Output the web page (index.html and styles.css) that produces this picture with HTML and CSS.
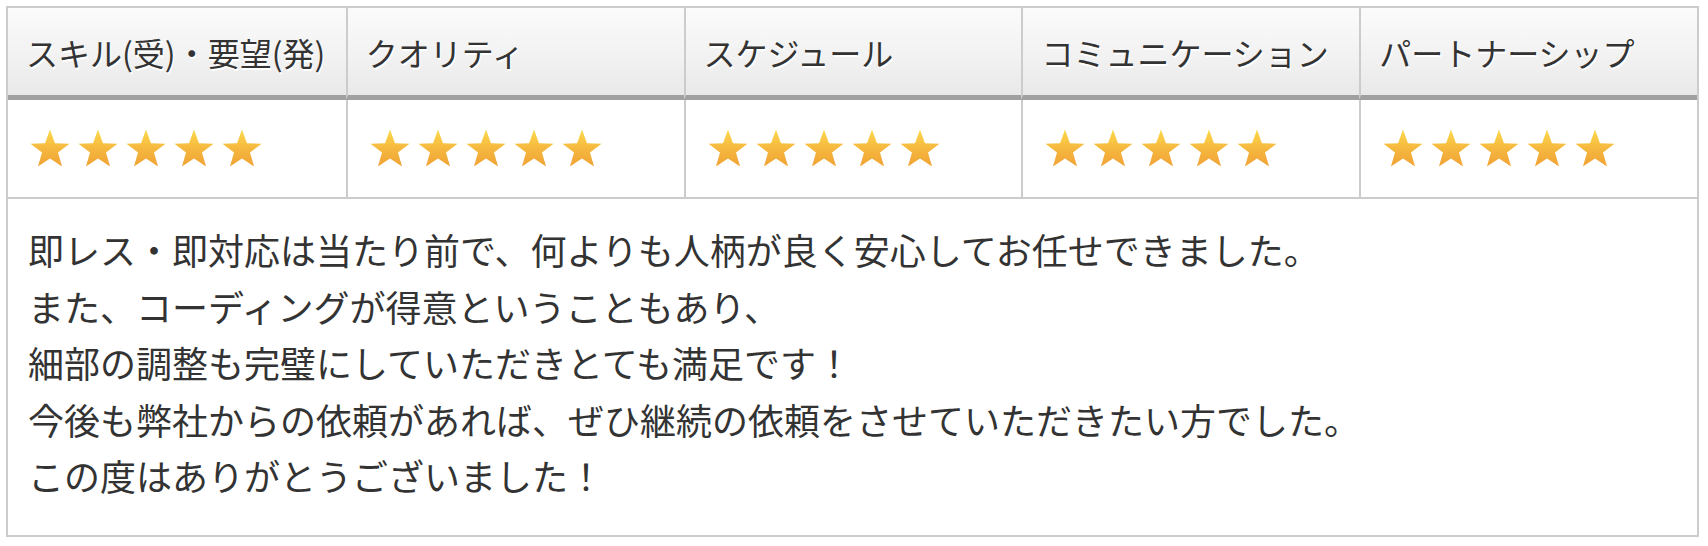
FILE: index.html
```html
<!DOCTYPE html>
<html lang="ja">
<head>
<meta charset="utf-8">
<title>評価</title>
<link rel="stylesheet" href="styles.css">
</head>
<body>
<svg class="defs" width="0" height="0" aria-hidden="true">
  <defs>
    <linearGradient id="starGrad" x1="0" y1="0" x2="0" y2="1">
      <stop offset="0" stop-color="#fcd94c"/>
      <stop offset="0.55" stop-color="#f5b63e"/>
      <stop offset="1" stop-color="#f0a236"/>
    </linearGradient>
  </defs>
</svg>
<div class="review">
  <div class="grid">
    <div class="head">スキル(受)・要望(発)</div>
    <div class="head">クオリティ</div>
    <div class="head">スケジュール</div>
    <div class="head">コミュニケーション</div>
    <div class="head">パートナーシップ</div>

    <div class="rate"><span class="stars">
      <svg class="star" viewBox="0 0 40 39"><polygon points="20,0.5 24.94,14.2 39.5,14.67 27.99,23.6 32.05,37.58 20,29.4 7.95,37.58 12.01,23.6 0.5,14.67 15.06,14.2" fill="url(#starGrad)"/></svg>
      <svg class="star" viewBox="0 0 40 39"><polygon points="20,0.5 24.94,14.2 39.5,14.67 27.99,23.6 32.05,37.58 20,29.4 7.95,37.58 12.01,23.6 0.5,14.67 15.06,14.2" fill="url(#starGrad)"/></svg>
      <svg class="star" viewBox="0 0 40 39"><polygon points="20,0.5 24.94,14.2 39.5,14.67 27.99,23.6 32.05,37.58 20,29.4 7.95,37.58 12.01,23.6 0.5,14.67 15.06,14.2" fill="url(#starGrad)"/></svg>
      <svg class="star" viewBox="0 0 40 39"><polygon points="20,0.5 24.94,14.2 39.5,14.67 27.99,23.6 32.05,37.58 20,29.4 7.95,37.58 12.01,23.6 0.5,14.67 15.06,14.2" fill="url(#starGrad)"/></svg>
      <svg class="star" viewBox="0 0 40 39"><polygon points="20,0.5 24.94,14.2 39.5,14.67 27.99,23.6 32.05,37.58 20,29.4 7.95,37.58 12.01,23.6 0.5,14.67 15.06,14.2" fill="url(#starGrad)"/></svg>
    </span></div>
    <div class="rate"><span class="stars">
      <svg class="star" viewBox="0 0 40 39"><polygon points="20,0.5 24.94,14.2 39.5,14.67 27.99,23.6 32.05,37.58 20,29.4 7.95,37.58 12.01,23.6 0.5,14.67 15.06,14.2" fill="url(#starGrad)"/></svg>
      <svg class="star" viewBox="0 0 40 39"><polygon points="20,0.5 24.94,14.2 39.5,14.67 27.99,23.6 32.05,37.58 20,29.4 7.95,37.58 12.01,23.6 0.5,14.67 15.06,14.2" fill="url(#starGrad)"/></svg>
      <svg class="star" viewBox="0 0 40 39"><polygon points="20,0.5 24.94,14.2 39.5,14.67 27.99,23.6 32.05,37.58 20,29.4 7.95,37.58 12.01,23.6 0.5,14.67 15.06,14.2" fill="url(#starGrad)"/></svg>
      <svg class="star" viewBox="0 0 40 39"><polygon points="20,0.5 24.94,14.2 39.5,14.67 27.99,23.6 32.05,37.58 20,29.4 7.95,37.58 12.01,23.6 0.5,14.67 15.06,14.2" fill="url(#starGrad)"/></svg>
      <svg class="star" viewBox="0 0 40 39"><polygon points="20,0.5 24.94,14.2 39.5,14.67 27.99,23.6 32.05,37.58 20,29.4 7.95,37.58 12.01,23.6 0.5,14.67 15.06,14.2" fill="url(#starGrad)"/></svg>
    </span></div>
    <div class="rate"><span class="stars">
      <svg class="star" viewBox="0 0 40 39"><polygon points="20,0.5 24.94,14.2 39.5,14.67 27.99,23.6 32.05,37.58 20,29.4 7.95,37.58 12.01,23.6 0.5,14.67 15.06,14.2" fill="url(#starGrad)"/></svg>
      <svg class="star" viewBox="0 0 40 39"><polygon points="20,0.5 24.94,14.2 39.5,14.67 27.99,23.6 32.05,37.58 20,29.4 7.95,37.58 12.01,23.6 0.5,14.67 15.06,14.2" fill="url(#starGrad)"/></svg>
      <svg class="star" viewBox="0 0 40 39"><polygon points="20,0.5 24.94,14.2 39.5,14.67 27.99,23.6 32.05,37.58 20,29.4 7.95,37.58 12.01,23.6 0.5,14.67 15.06,14.2" fill="url(#starGrad)"/></svg>
      <svg class="star" viewBox="0 0 40 39"><polygon points="20,0.5 24.94,14.2 39.5,14.67 27.99,23.6 32.05,37.58 20,29.4 7.95,37.58 12.01,23.6 0.5,14.67 15.06,14.2" fill="url(#starGrad)"/></svg>
      <svg class="star" viewBox="0 0 40 39"><polygon points="20,0.5 24.94,14.2 39.5,14.67 27.99,23.6 32.05,37.58 20,29.4 7.95,37.58 12.01,23.6 0.5,14.67 15.06,14.2" fill="url(#starGrad)"/></svg>
    </span></div>
    <div class="rate"><span class="stars">
      <svg class="star" viewBox="0 0 40 39"><polygon points="20,0.5 24.94,14.2 39.5,14.67 27.99,23.6 32.05,37.58 20,29.4 7.95,37.58 12.01,23.6 0.5,14.67 15.06,14.2" fill="url(#starGrad)"/></svg>
      <svg class="star" viewBox="0 0 40 39"><polygon points="20,0.5 24.94,14.2 39.5,14.67 27.99,23.6 32.05,37.58 20,29.4 7.95,37.58 12.01,23.6 0.5,14.67 15.06,14.2" fill="url(#starGrad)"/></svg>
      <svg class="star" viewBox="0 0 40 39"><polygon points="20,0.5 24.94,14.2 39.5,14.67 27.99,23.6 32.05,37.58 20,29.4 7.95,37.58 12.01,23.6 0.5,14.67 15.06,14.2" fill="url(#starGrad)"/></svg>
      <svg class="star" viewBox="0 0 40 39"><polygon points="20,0.5 24.94,14.2 39.5,14.67 27.99,23.6 32.05,37.58 20,29.4 7.95,37.58 12.01,23.6 0.5,14.67 15.06,14.2" fill="url(#starGrad)"/></svg>
      <svg class="star" viewBox="0 0 40 39"><polygon points="20,0.5 24.94,14.2 39.5,14.67 27.99,23.6 32.05,37.58 20,29.4 7.95,37.58 12.01,23.6 0.5,14.67 15.06,14.2" fill="url(#starGrad)"/></svg>
    </span></div>
    <div class="rate"><span class="stars">
      <svg class="star" viewBox="0 0 40 39"><polygon points="20,0.5 24.94,14.2 39.5,14.67 27.99,23.6 32.05,37.58 20,29.4 7.95,37.58 12.01,23.6 0.5,14.67 15.06,14.2" fill="url(#starGrad)"/></svg>
      <svg class="star" viewBox="0 0 40 39"><polygon points="20,0.5 24.94,14.2 39.5,14.67 27.99,23.6 32.05,37.58 20,29.4 7.95,37.58 12.01,23.6 0.5,14.67 15.06,14.2" fill="url(#starGrad)"/></svg>
      <svg class="star" viewBox="0 0 40 39"><polygon points="20,0.5 24.94,14.2 39.5,14.67 27.99,23.6 32.05,37.58 20,29.4 7.95,37.58 12.01,23.6 0.5,14.67 15.06,14.2" fill="url(#starGrad)"/></svg>
      <svg class="star" viewBox="0 0 40 39"><polygon points="20,0.5 24.94,14.2 39.5,14.67 27.99,23.6 32.05,37.58 20,29.4 7.95,37.58 12.01,23.6 0.5,14.67 15.06,14.2" fill="url(#starGrad)"/></svg>
      <svg class="star" viewBox="0 0 40 39"><polygon points="20,0.5 24.94,14.2 39.5,14.67 27.99,23.6 32.05,37.58 20,29.4 7.95,37.58 12.01,23.6 0.5,14.67 15.06,14.2" fill="url(#starGrad)"/></svg>
    </span></div>
  </div>
  <div class="comment">
    <p>即レス・即対応は当たり前で、何よりも人柄が良く安心してお任せできました。</p>
    <p>また、コーディングが得意ということもあり、</p>
    <p>細部の調整も完璧にしていただきとても満足です！</p>
    <p>今後も弊社からの依頼があれば、ぜひ継続の依頼をさせていただきたい方でした。</p>
    <p>この度はありがとうございました！</p>
  </div>
</div>
</body>
</html>
```

FILE: styles.css
```css
html, body {
  margin: 0;
  padding: 0;
  background: #fff;
}
body {
  padding: 6px 9px 0 6px;
  font-family: "Noto Sans CJK JP", "Noto Sans", sans-serif;
  color: #333;
}
.defs {
  position: absolute;
  width: 0;
  height: 0;
}
.review {
  border: 2px solid #ccc;
  width: 1689px;
}
.grid {
  display: grid;
  grid-template-columns: repeat(5, 1fr);
  grid-template-rows: 92px 99px;
}
.head {
  display: flex;
  align-items: center;
  padding-left: 18px;
  font-size: 32px;
  color: #333;
  text-shadow: 1px 2px 0 #fff;
  background: linear-gradient(to bottom, #fbfbfb 0%, #f1f1f1 60%, #e9e9e9 100%);
  border-bottom: 5px solid #a0a0a0;
  white-space: nowrap;
}
.rate {
  display: flex;
  align-items: center;
  padding-left: 22px;
  border-bottom: 2px solid #ccc;
}
.head:not(:nth-child(5n+1)),
.rate:not(:nth-child(5n+1)) {
  border-left: 2px solid #ccc;
}
.stars {
  display: flex;
  gap: 8px;
}
.star {
  width: 40px;
  height: 39px;
  display: block;
}
.comment {
  padding: 22px 18px 31.5px 20px;
  font-size: 36px;
  line-height: 56.5px;
  color: #333;
}
.comment p {
  margin: 0;
  white-space: nowrap;
}
```
